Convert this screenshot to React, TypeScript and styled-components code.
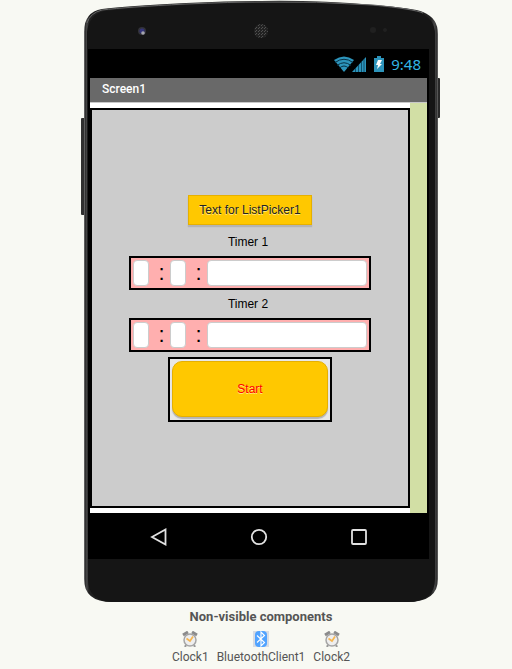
import React from "react";
import styled, { createGlobalStyle } from "styled-components";

const GlobalStyle = createGlobalStyle`
  * { box-sizing: border-box; }
  body {
    margin: 0;
    background: #f8f9f3;
    font-family: "Liberation Sans", Arial, sans-serif;
    font-size: 12px;
    color: #000;
  }
  button, input { font: inherit; margin: 0; }
`;

const Page = styled.main`
  display: flex;
  flex-direction: column;
  align-items: center;
  padding-left: 10px;
`;

const Phone = styled.section`
  position: relative;
  width: 100%;
  max-width: 360px;
  padding: 49px 12px 43px 7px;
`;

const PhoneArt = styled.svg`
  position: absolute;
  inset: 0;
  width: 100%;
  height: 100%;
`;

const Display = styled.div`
  position: relative;
  background: #000;
  padding: 0 2px;
`;

const StatusBar = styled.div`
  display: flex;
  align-items: center;
  justify-content: flex-end;
  height: 29px;
  padding-right: 6px;
  color: #33b5e5;
  font: 15px/28px "Noto Sans", sans-serif;
`;

const StatusIcons = styled.svg`
  margin-right: 6px;
`;

const TitleBar = styled.h1`
  margin: 0;
  height: 25px;
  padding: 0 12px;
  background: #696969;
  border-bottom: 1px solid #c8c8c8;
  color: #fff;
  font: 500 12px/22px Roboto, sans-serif;
`;

const Workspace = styled.div`
  display: flex;
  background: #d2dfa5;
  padding-right: 17px;
`;

const Form = styled.div`
  flex: 1;
  background: #fff;
  padding: 5px 0;
`;

const Panel = styled.div`
  display: flex;
  flex-direction: column;
  align-items: center;
  justify-content: center;
  height: 400px;
  border: 2px solid #000;
  background: #ccc;
`;

const AppButton = styled.button<{ $rounded?: boolean }>`
  border: 1px solid #e6b000;
  background: #ffc800;
  box-shadow: 0 2px 1px #b4b4b4;
  padding: 0 10px;
  width: ${(p) => (p.$rounded ? "100%" : "auto")};
  height: ${(p) => (p.$rounded ? "56px" : "30px")};
  border-radius: ${(p) => (p.$rounded ? "10px" : "0")};
  color: ${(p) => (p.$rounded ? "#f00" : "#222")};
  text-shadow: 0 1px 0 #ffe680;
`;

const Timer = styled.fieldset`
  display: flex;
  flex-direction: column;
  align-items: center;
  margin: 0;
  padding: 6px 0 0;
  border: 0;
`;

const TimerLabel = styled.span`
  line-height: 16px;
  padding-right: 4px;
  margin-bottom: 6px;
`;

const TimerRow = styled.div`
  display: flex;
  align-items: center;
  width: 242px;
  height: 34px;
  padding: 0 2px;
  border: 2px solid #000;
  background: #ffafaf;
`;

const Field = styled.input<{ $wide?: boolean }>`
  width: 16px;
  flex: ${(p) => (p.$wide ? "1" : "none")};
  min-width: 0;
  height: 26px;
  padding: 0 2px;
  border: 1px solid #ccc;
  border-radius: 4px;
  background: #fff;
`;

const Colon = styled.span`
  width: 21px;
  padding-left: 4px;
  text-align: center;
  font-size: 22px;
  line-height: 26px;
`;

const PickerSlot = styled.div`
  padding-bottom: 3px;
`;

const StartBox = styled.div`
  width: 164px;
  height: 65px;
  margin-top: 5px;
  padding: 2px;
  border: 2px solid #000;
  background: #e8e8e8;
`;

const NavBar = styled.nav`
  display: flex;
  justify-content: center;
  height: 46px;
`;

const NavButton = styled.button`
  display: grid;
  place-items: center;
  width: 100px;
  padding: 2px 0 0;
  border: 0;
  background: none;
`;

const Tray = styled.section`
  display: flex;
  flex-direction: column;
  align-items: center;
  padding-top: 7px;
  color: #555;
  font-family: Roboto, sans-serif;
`;

const TrayTitle = styled.h2`
  margin: 0;
  font-size: 13px;
  font-weight: bold;
  line-height: 16px;
`;

const TrayItems = styled.div`
  display: flex;
  gap: 8px;
  padding-top: 6px;
`;

const TrayItem = styled.div`
  display: flex;
  flex-direction: column;
  align-items: center;
  gap: 2px;
  line-height: 16px;
`;

const PhoneBody = () => (
  <PhoneArt viewBox="0 0 360 602" preserveAspectRatio="none" aria-hidden="true">
    <defs>
      <linearGradient id="rim" x1="0" x2="1">
        <stop offset="0" stopColor="#777" />
        <stop offset="0.004" stopColor="#303030" />
        <stop offset="0.008" stopColor="#494949" />
        <stop offset="0.014" stopColor="#202020" />
        <stop offset="0.98" stopColor="#202020" />
        <stop offset="0.99" stopColor="#464646" />
        <stop offset="0.997" stopColor="#303030" />
        <stop offset="1" stopColor="#777" />
      </linearGradient>
      <pattern id="mesh" width="3" height="3" patternUnits="userSpaceOnUse">
        <rect width="3" height="3" fill="#222" />
        <path d="M0 2L2 0" stroke="#505050" />
      </pattern>
    </defs>
    <rect x="0" y="118" width="5" height="97" rx="1" fill="#303030" />
    <rect x="355" y="78" width="4" height="40" rx="1" fill="#292929" />
    <path d="M3 32Q3 12 21 9Q45 6 105 3Q150 1 180 1Q235 0 292 5Q333 8 342 12Q357 18 357 34V579Q357 602 326 602H31Q3 602 3 579Z" fill="url(#rim)" />
    <path d="M6 32Q8 15 23 11Q50 8 105 5Q150 3 180 3Q235 2 292 6Q332 10 340 13Q354 20 354 34V579Q354 602 326 602H31Q7 601 7 579Z" fill="#151515" />
    <path d="M6 23Q9 13 21 10Q45 7 105 4Q150 2 180 2Q235 1 292 5Q333 9 342 13" fill="none" stroke="#666" strokeWidth="1" />
    <circle cx="61" cy="31" r="4" fill="#33333a" />
    <circle cx="61" cy="31" r="2.5" fill="#34347b" />
    <circle cx="62" cy="33" r="1.8" fill="#a5a5ad" />
    <circle cx="180" cy="31" r="7" fill="url(#mesh)" />
    <circle cx="292" cy="30" r="3" fill="#202020" />
    <circle cx="304" cy="30" r="2" fill="#202020" />
  </PhoneArt>
);

const StatusGlyphs = () => (
  <StatusIcons width="51" height="18" viewBox="0 0 51 18" aria-hidden="true">
    <path d="M0 5Q10 -2 20 5L10 17Z" fill="#2d94bb" />
    <g fill="none" stroke="#063044" strokeWidth="1">
      <path d="M1 7.500Q10 1 19 7.500" />
      <path d="M3 10.500Q10 5 17 10.500" />
      <path d="M5.500 13Q10 9 14.500 13" />
    </g>
    <path d="M18 17L32 2V17Z" fill="#2d94bb" />
    <path d="M21.500 13V17M24.500 10V17M27.500 7V17M30 4V17" stroke="#07405a" strokeWidth="0.8" />
    <path d="M40 3H43V1H47V3H50V17H40Z" fill="#2d94bb" />
    <path d="M44 5H48L46 9H48L43 14L44 10H42Z" fill="#fff" />
  </StatusIcons>
);

const ClockIcon = () => (
  <svg width="16" height="16" viewBox="0 0 16 16" aria-hidden="true">
    <path d="M1 4L6 1M10 1L15 4" stroke="#8b8b8b" strokeWidth="3" />
    <path d="M4 14L3 16M12 14L13 16" stroke="#999" strokeWidth="2" />
    <circle cx="8" cy="9" r="6" fill="#eee" stroke="#a5a5a5" strokeWidth="1.5" />
    <path d="M4.500 7.500L8 10L11 5.500" fill="none" stroke="#f5b650" strokeWidth="1.7" />
  </svg>
);

const BluetoothIcon = () => (
  <svg width="16" height="16" viewBox="0 0 16 16" aria-hidden="true">
    <rect width="16" height="16" fill="#d8dce3" />
    <rect x="2" width="12" height="16" rx="4" fill="#50a3ff" />
    <path d="M4 4.500L11.500 11.500L8 15V1L11.500 4.500L4 11.500" fill="none" stroke="#fff" strokeWidth="1.1" />
  </svg>
);

const NAV = [
  { name: "Back", shape: <path d="M2 9L15.500 1.500V16.500Z" /> },
  { name: "Home", shape: <circle cx="9" cy="9" r="7.2" /> },
  { name: "Recent apps", shape: <rect x="2" y="2" width="14" height="14" rx="1" /> },
];

const TimerInput = ({ label }: { label: string }) => (
  <Timer aria-label={label}>
    <TimerLabel>{label}</TimerLabel>
    <TimerRow>
      <Field aria-label={`${label} hours`} />
      <Colon>:</Colon>
      <Field aria-label={`${label} minutes`} />
      <Colon>:</Colon>
      <Field $wide aria-label={`${label} seconds`} />
    </TimerRow>
  </Timer>
);

const COMPONENTS = [
  { name: "Clock1", icon: <ClockIcon /> },
  { name: "BluetoothClient1", icon: <BluetoothIcon /> },
  { name: "Clock2", icon: <ClockIcon /> },
];

export default function App() {
  return (
    <>
      <GlobalStyle />
      <Page>
        <Phone>
          <PhoneBody />
          <Display>
            <StatusBar>
              <StatusGlyphs />
              9:48
            </StatusBar>
            <TitleBar>Screen1</TitleBar>
            <Workspace>
              <Form>
                <Panel>
                  <PickerSlot>
                    <AppButton>Text for ListPicker1</AppButton>
                  </PickerSlot>
                  <TimerInput label="Timer 1" />
                  <TimerInput label="Timer 2" />
                  <StartBox>
                    <AppButton $rounded>Start</AppButton>
                  </StartBox>
                </Panel>
              </Form>
            </Workspace>
            <NavBar>
              {NAV.map((item) => (
                <NavButton key={item.name} aria-label={item.name}>
                  <svg width="18" height="18" viewBox="0 0 18 18" fill="none" stroke="#e2e2e2" strokeWidth="1.8">
                    {item.shape}
                  </svg>
                </NavButton>
              ))}
            </NavBar>
          </Display>
        </Phone>
        <Tray>
          <TrayTitle>Non-visible components</TrayTitle>
          <TrayItems>
            {COMPONENTS.map((item) => (
              <TrayItem key={item.name}>
                {item.icon}
                {item.name}
              </TrayItem>
            ))}
          </TrayItems>
        </Tray>
      </Page>
    </>
  );
}
